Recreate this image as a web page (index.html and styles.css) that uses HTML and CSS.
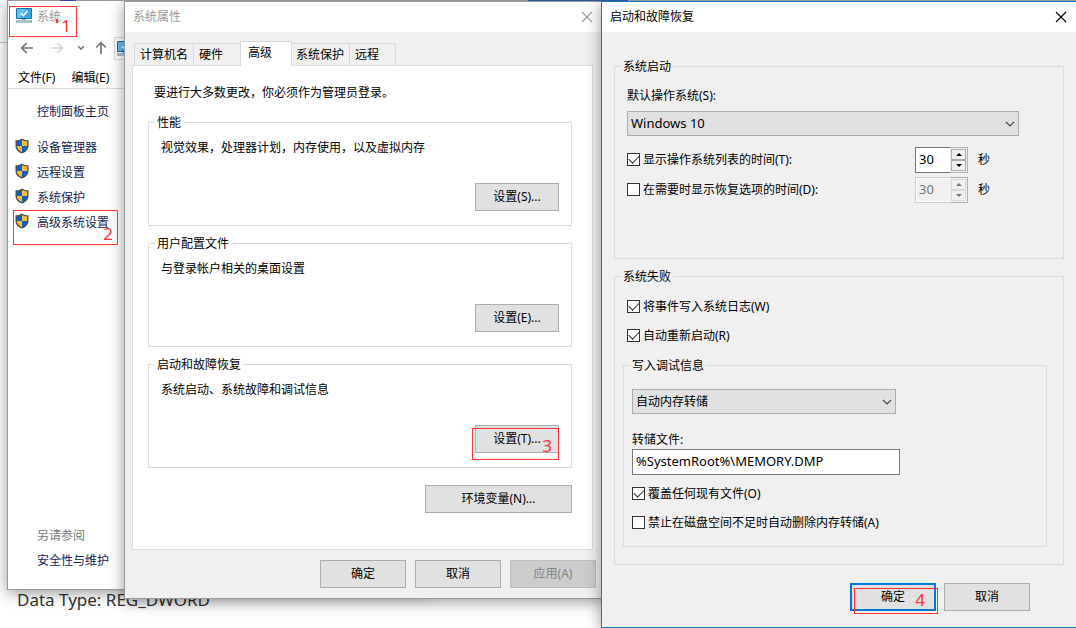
FILE: index.html
```html
<!DOCTYPE html>
<html lang="zh-CN">
<head>
<meta charset="utf-8">
<title>启动和故障恢复</title>
<link rel="stylesheet" href="styles.css">
</head>
<body>
<svg class="symbols" aria-hidden="true">
  <symbol id="shield" viewBox="0 0 14 16">
    <path d="M7 .4C5.300 1.600 3 2.300.5 2.300V8c0 3.600 2.600 6 6.500 7.600C10.900 14 13.500 11.600 13.500 8V2.300C11 2.300 8.700 1.600 7 .4z" fill="#4d4d4d"/>
    <path d="M7 2C5.500 2.900 3.700 3.400 1.800 3.500V8H7z" fill="#0a63c4"/>
    <path d="M7 2c1.500.9 3.300 1.400 5.200 1.500V8H7z" fill="#fdbb36"/>
    <path d="M1.800 8c0 2.800 2 4.800 5.200 6.200V8z" fill="#fdbb36"/>
    <path d="M12.200 8c0 2.800-2 4.800-5.200 6.200V8z" fill="#0a63c4"/>
  </symbol>
  <symbol id="monitor" viewBox="0 0 16 15">
    <path d="M.5.500h15v10H.5z" fill="#33a7e8" stroke="#1f6f9f"/>
    <path d="M1 1h9L4 10H1z" fill="#5fc0f3"/>
    <path d="M5 5.200l2.300 2.300L11.500 3" fill="none" stroke="#fff" stroke-width="1.600"/>
    <path d="M6 11h4v1H6z" fill="#8fa9b8"/>
    <path d="M0 12.500h16V14.500H0z" fill="#5c8ca6"/>
    <path d="M1 13h14v.7H1z" fill="#c9dde8"/>
  </symbol>
  <symbol id="close" viewBox="0 0 12 12">
    <path d="M1 1l10 10M11 1L1 11" fill="none" stroke="currentColor" stroke-width="1.100"/>
  </symbol>
  <symbol id="chevron" viewBox="0 0 10 6">
    <path d="M1 1l4 4 4-4" fill="none" stroke="currentColor" stroke-width="1.100"/>
  </symbol>
</svg>

<div class="desktop">
  <div class="page-strip"><span class="strip-mark"></span><span class="strip-blue"></span></div>
  <div class="page-head"></div>
  <p class="page-text">Data Type: REG_DWORD</p>

  <section class="window system">
    <header class="system-title">
      <svg class="monitor"><use href="#monitor"/></svg>
      <span>系统</span>
    </header>
    <nav class="toolbar">
      <button class="tool" aria-label="后退"><svg width="14" height="12" viewBox="0 0 14 12"><path d="M13 6H2M6.500 1.200L1.700 6l4.800 4.800" fill="none" stroke="#777" stroke-width="1.700"/></svg></button>
      <button class="tool" aria-label="前进"><svg width="14" height="12" viewBox="0 0 14 12"><path d="M1 6h11M7.500 1.200L12.300 6l-4.800 4.800" fill="none" stroke="#d6d6d6" stroke-width="1.700"/></svg></button>
      <button class="tool recent" aria-label="最近位置"><svg width="8" height="6" viewBox="0 0 8 6"><path d="M1.200 1.200L4 4l2.800-2.800" fill="none" stroke="#777" stroke-width="1.600"/></svg></button>
      <button class="tool" aria-label="向上"><svg width="12" height="14" viewBox="0 0 12 14"><path d="M6 13V2M1.200 6.500L6 1.700l4.800 4.800" fill="none" stroke="#777" stroke-width="1.700"/></svg></button>
      <div class="address"><svg class="monitor"><use href="#monitor"/></svg></div>
    </nav>
    <div class="menubar"><button>文件(F)</button><button>编辑(E)</button></div>
    <div class="sidebar">
      <a href="#home">控制面板主页</a>
      <ul class="tasks">
        <li><svg class="shield"><use href="#shield"/></svg><a href="#devices">设备管理器</a></li>
        <li><svg class="shield"><use href="#shield"/></svg><a href="#remote">远程设置</a></li>
        <li><svg class="shield"><use href="#shield"/></svg><a href="#protect">系统保护</a></li>
        <li><svg class="shield"><use href="#shield"/></svg><a href="#advanced">高级系统设置</a></li>
      </ul>
      <div class="see-also"><span>另请参阅</span><a href="#security">安全性与维护</a></div>
    </div>
  </section>

  <section class="window props">
    <header class="titlebar inactive"><h2>系统属性</h2><button class="close" aria-label="关闭"><svg><use href="#close"/></svg></button></header>
    <div class="props-body">
      <div class="tabs" role="tablist">
        <button class="tab tab-long" role="tab">计算机名</button>
        <button class="tab" role="tab">硬件</button>
        <button class="tab active" role="tab" aria-selected="true">高级</button>
        <button class="tab tab-long" role="tab">系统保护</button>
        <button class="tab" role="tab">远程</button>
      </div>
      <div class="panel">
        <p class="notice">要进行大多数更改，你必须作为管理员登录。</p>
        <fieldset class="group">
          <legend>性能</legend>
          <div class="group-body"><p>视觉效果，处理器计划，内存使用，以及虚拟内存</p><button class="btn">设置(S)...</button></div>
        </fieldset>
        <fieldset class="group">
          <legend>用户配置文件</legend>
          <div class="group-body"><p>与登录帐户相关的桌面设置</p><button class="btn">设置(E)...</button></div>
        </fieldset>
        <fieldset class="group">
          <legend>启动和故障恢复</legend>
          <div class="group-body"><p>系统启动、系统故障和调试信息</p><button class="btn">设置(T)...</button></div>
        </fieldset>
        <button class="btn env">环境变量(N)...</button>
      </div>
      <div class="actions"><button class="btn">确定</button><button class="btn">取消</button><button class="btn" disabled>应用(A)</button></div>
    </div>
  </section>

  <section class="window recovery">
    <header class="titlebar"><h2>启动和故障恢复</h2><button class="close" aria-label="关闭"><svg><use href="#close"/></svg></button></header>
    <div class="recovery-body">
      <fieldset class="startup">
        <legend>系统启动</legend>
        <div class="startup-body">
          <label for="os">默认操作系统(S):</label>
          <div class="select"><select id="os"><option>Windows 10</option></select><svg><use href="#chevron"/></svg></div>
          <div class="time-row">
            <label class="check"><input type="checkbox" checked>显示操作系统列表的时间(T):</label>
            <div class="spinner">
              <input type="text" value="30" aria-label="显示操作系统列表的时间">
              <div class="steps"><button aria-label="增加"><i class="up"></i></button><button aria-label="减少"><i class="down"></i></button></div>
            </div>
            <span>秒</span>
          </div>
          <div class="time-row">
            <label class="check"><input type="checkbox">在需要时显示恢复选项的时间(D):</label>
            <div class="spinner off">
              <input type="text" value="30" aria-label="显示恢复选项的时间" disabled>
              <div class="steps"><button aria-label="增加" disabled><i class="up"></i></button><button aria-label="减少" disabled><i class="down"></i></button></div>
            </div>
            <span>秒</span>
          </div>
        </div>
      </fieldset>
      <fieldset class="failure">
        <legend>系统失败</legend>
        <div class="failure-body">
          <label class="check"><input type="checkbox" checked>将事件写入系统日志(W)</label>
          <label class="check"><input type="checkbox" checked>自动重新启动(R)</label>
        </div>
        <fieldset class="debug">
          <legend>写入调试信息</legend>
          <div class="debug-body">
            <div class="select"><select aria-label="写入调试信息"><option>自动内存转储</option></select><svg><use href="#chevron"/></svg></div>
            <label class="file-label" for="dump">转储文件:</label>
            <input class="file" id="dump" type="text" value="%SystemRoot%\MEMORY.DMP">
            <label class="check"><input type="checkbox" checked>覆盖任何现有文件(O)</label>
            <label class="check"><input type="checkbox">禁止在磁盘空间不足时自动删除内存转储(A)</label>
          </div>
        </fieldset>
      </fieldset>
      <div class="actions"><button class="btn default">确定</button><button class="btn">取消</button></div>
    </div>
  </section>

  <div class="mark mark-1"><i class="tick"></i>1</div>
  <div class="mark mark-2">2</div>
  <div class="mark mark-3">3</div>
  <div class="mark mark-4">4</div>
</div>
</body>
</html>
```
FILE: styles.css
```css
* { box-sizing: border-box; }

body {
  margin: 0;
  background: #fff;
  color: #000;
  font: 12px/18px "Noto Sans", "Noto Sans CJK SC", sans-serif;
}

button, input, select {
  margin: 0;
  padding: 0;
  border: 0;
  border-radius: 0;
  background: none;
  color: inherit;
  font: inherit;
}

h2, p, ul { margin: 0; padding: 0; font: inherit; }
ul { list-style: none; }
svg { display: block; }

.symbols { position: absolute; width: 0; height: 0; }

.desktop {
  position: relative;
  min-height: 628px;
  height: 100vh;
  overflow: hidden;
}

.page-strip {
  position: relative;
  z-index: 1;
  display: flex;
  height: 1px;
  margin-left: 7px;
  background: #999;
}
.strip-mark { width: 16px; margin-left: 53px; background: #4a3c9c; }
.strip-blue { width: 100px; margin-left: 452px; background: #2f5597; }
.page-head { height: 42px; border-bottom: 1px solid #c4c4c4; }

.page-text {
  position: absolute;
  left: 17px;
  bottom: 16px;
  color: #333;
  font-size: 17px;
  line-height: 24px;
}

.window {
  position: absolute;
  display: flex;
  flex-direction: column;
  border: 1px solid #999;
  background: #fff;
  box-shadow: 0 3px 14px rgba(0, 0, 0, .4);
}

/* System control panel */
.system { left: 7px; top: 0; bottom: 38px; width: 420px; }
.system-title {
  display: flex;
  align-items: center;
  gap: 5px;
  height: 32px;
  padding-left: 8px;
  color: #999;
}
.monitor { width: 16px; height: 15px; }
.system-title .monitor { margin-bottom: 3px; }
.toolbar { display: flex; align-items: center; height: 30px; padding-left: 12px; }
.tool { display: flex; margin-right: 16px; }
.tool:nth-child(2) { margin-right: 13px; }
.tool:nth-child(3) { margin-right: 10px; }
.tool:nth-child(4) { margin-right: 7px; }
.address { flex: 1; height: 23px; padding: 3px 2px; border: 1px solid #d9d9d9; }
.menubar {
  display: flex;
  gap: 16px;
  height: 26px;
  padding: 5px 10px 0;
  border-bottom: 1px solid #d9d9d9;
}
.sidebar {
  display: flex;
  flex: 1;
  flex-direction: column;
  padding: 14px 0 19px 29px;
  color: #151c55;
}
.sidebar a { color: inherit; text-decoration: none; }
.tasks { display: grid; gap: 7px; margin: 18px 0 0 -22px; }
.tasks li { display: flex; align-items: flex-start; gap: 8px; }
.shield { width: 14px; height: 16px; margin-top: -1px; }
.see-also { display: grid; gap: 7px; margin-top: auto; }
.see-also span { color: #777; }

/* Dialog frame */
.titlebar {
  display: flex;
  align-items: center;
  justify-content: space-between;
  height: 30px;
  padding: 0 9px 0 8px;
  background: #fff;
}
.titlebar.inactive { color: #999; }
.close svg { width: 12px; height: 12px; }

.btn {
  min-width: 86px;
  height: 28px;
  border: 1px solid #adadad;
  background: #e1e1e1;
  line-height: 26px;
}
.btn:disabled { border-color: #bfbfbf; background: #ccc; color: #838383; }
.btn.default { border: 2px solid #0078d7; line-height: 24px; }
.actions { display: flex; justify-content: flex-end; gap: 9px; }

fieldset { min-width: 0; margin: 0; padding: 0; border: 1px solid #dcdcdc; }
legend { margin-left: 6px; padding: 0 2px; line-height: 17px; }

/* System properties */
.props { left: 124px; top: 1px; width: 481px; background: #f0f0f0; }
.props .titlebar { padding-right: 11px; }
.props-body { padding: 9px 8px 10px 7px; }
.tabs { display: flex; align-items: flex-end; padding-left: 2px; }
.tab {
  width: 48px;
  height: 22px;
  margin-left: -1px;
  padding-left: 5px;
  border: 1px solid #d9d9d9;
  border-bottom: 0;
  text-align: left;
}
.tab:first-child { margin-left: 0; }
.tab-long { width: 60px; }
.tab.active {
  position: relative;
  width: 52px;
  height: 25px;
  margin-bottom: -1px;
  padding: 0 0 2px 7px;
  background: #fff;
}
.active + .tab-long { width: 59px; padding-left: 4px; }
.tab:last-child { width: 47px; }
.panel {
  margin-right: 3px;
  padding: 18px 20px 36px 15px;
  border: 1px solid #dcdcdc;
  background: #fff;
}
.notice { margin-bottom: 12px; padding-left: 6px; }
.group + .group { margin-top: 9px; }
.group-body { display: flex; flex-direction: column; padding: 8px 12px 14px; }
.group-body .btn { align-self: flex-end; min-width: 84px; margin-top: 26px; }
.env { display: block; width: 147px; margin: 17px 0 0 auto; }
.props .actions { margin-top: 10px; }

/* Startup and recovery */
.recovery {
  left: 601px;
  right: 0;
  top: 1px;
  bottom: 0;
  border-color: #1a76c7;
  border-right: 0;
  background: #f0f0f0;
}
.recovery-body { padding: 26px 12px 16px; }
.startup-body {
  display: flex;
  flex-direction: column;
  padding: 12px 44px 55px 12px;
}
.select { position: relative; margin-top: 6px; }
.select select {
  display: block;
  width: 100%;
  height: 25px;
  padding-left: 3px;
  border: 1px solid #adadad;
  background: #e1e1e1;
  appearance: none;
}
.select svg {
  position: absolute;
  right: 4px;
  top: 10px;
  width: 10px;
  height: 6px;
  color: #444;
  pointer-events: none;
}
#os, .file, .spinner { font-size: 13px; }
#os { padding-bottom: 2px; }
.time-row { display: flex; align-items: center; margin-top: 4px; }
.select + .time-row { margin-top: 11px; }
.time-row .check { flex: 1; }
.time-row > span { width: 51px; padding-left: 10px; }

.check { display: flex; align-items: center; gap: 3px; }
.check input {
  display: grid;
  place-items: center;
  width: 13px;
  height: 13px;
  margin-bottom: 2px;
  border: 1px solid #333;
  background: #fff;
  appearance: none;
}
.check input:checked::before {
  content: "";
  width: 9px;
  height: 5px;
  margin-bottom: 3px;
  border: solid #333;
  border-width: 0 0 1px 1px;
  transform: rotate(-45deg);
}

.spinner {
  display: flex;
  width: 53px;
  height: 26px;
  border: 1px solid #7a7a7a;
  background: #fff;
}
.spinner input { flex: 1; min-width: 0; padding: 0 0 3px 3px; }
.steps {
  display: grid;
  grid-template-rows: 1fr 1fr;
  width: 18px;
  margin: -1px;
  padding: 1px;
  border: 1px solid #adb2b5;
  border-left: 0;
  background: #f0f0f0;
}
.steps button {
  display: grid;
  place-items: center;
  border: 1px solid #adadad;
}
.up, .down { border: 3px solid transparent; }
.up { border-top: 0; border-bottom-color: #000; }
.down { border-bottom: 0; border-top-color: #000; }
.off { border-color: #ccc; background: #f0f0f0; color: #777; box-shadow: inset 0 0 0 1px #fff; }
.off .steps button { border-color: #d9d9d9; }
.off .up { border-bottom-color: #777; }
.off .down { border-top-color: #777; }

.failure { margin-top: 9px; padding: 0 16px 17px 8px; }
.failure > legend { margin-left: -2px; }
.failure-body { display: grid; gap: 11px; padding: 13px 4px 12px; }
.debug-body {
  display: flex;
  flex-direction: column;
  align-items: flex-start;
  padding: 15px 8px 14px;
}
.debug-body .select { width: 264px; margin-top: 0; }
.file-label { margin-top: 17px; }
.file {
  width: 268px;
  height: 26px;
  margin-bottom: 10px;
  padding: 0 3px 2px;
  border: 1px solid #7a7a7a;
  background: #fff;
}
.debug-body .check + .check { margin-top: 11px; }
.recovery .actions { gap: 8px; margin-top: 18px; padding-right: 34px; }

/* Numbered steps drawn over the windows */
.mark {
  position: absolute;
  z-index: 1;
  display: flex;
  align-items: flex-end;
  justify-content: flex-end;
  border: 1px solid #f33;
  color: #f33;
  font-size: 17px;
  line-height: 20px;
}
.mark-1 { left: 9px; top: 6px; width: 68px; height: 31px; padding-right: 5px; }
.mark-2 { left: 13px; top: 210px; width: 105px; height: 35px; padding-right: 4px; }
.mark-3 { left: 472px; top: 428px; width: 87px; height: 32px; padding: 0 6px 3px; }
.mark-4 { left: 854px; top: 588px; width: 84px; height: 26px; padding: 0 12px 3px; }
.tick { width: 2px; height: 4px; margin: 0 3px 13px 0; background: #f33; }
```
